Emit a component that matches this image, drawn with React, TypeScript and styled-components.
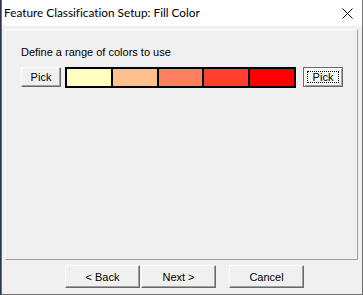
import React from 'react';
import styled, { createGlobalStyle } from 'styled-components';

const GlobalStyle = createGlobalStyle`
  html, body {
    margin: 0;
    padding: 0;
    background: #2a3552;
  }
  body {
    width: 363px;
    height: 295px;
    overflow: hidden;
  }
  * {
    box-sizing: border-box;
  }
`;

const Window = styled.div`
  width: 362px;
  height: 295px;
  margin-left: 1px;
  display: flex;
  flex-direction: column;
  background: #f0f0f0;
  border-left: 1px solid #6f6f6f;
  border-right: 1px solid #6f6f6f;
  border-bottom: 1px solid #6f6f6f;
  font-family: "Liberation Sans", Arial, sans-serif;
  color: #000;
`;

const TitleBar = styled.div`
  height: 26px;
  flex: none;
  display: flex;
  align-items: center;
  justify-content: space-between;
  background: #fff;
  padding-left: 2px;
`;

const Title = styled.span`
  font-family: Lato, "Liberation Sans", sans-serif;
  font-size: 11.8px;
  line-height: 16px;
  font-variant-ligatures: none;
`;

const CloseButton = styled.div`
  width: 30px;
  height: 26px;
  display: flex;
  align-items: center;
  justify-content: center;
`;

const Body = styled.div`
  flex: 1;
  display: flex;
  flex-direction: column;
  padding: 3px 4px 0 3px;
`;

const Panel = styled.div`
  height: 231px;
  flex: none;
  display: flex;
  flex-direction: column;
  padding: 16px 0 0 15px;
  background: #f0f0f0;
  border-top: 1px solid #fff;
  border-left: 1px solid #fff;
  border-right: 1px solid #a0a0a0;
  border-bottom: 1px solid #a0a0a0;
`;

const Label = styled.div`
  font-size: 11px;
  line-height: 13px;
`;

const Row = styled.div`
  display: flex;
  align-items: flex-start;
  margin-top: 8px;
`;

const Button = styled.button<{ $small?: boolean; $default?: boolean }>`
  width: ${(p) => (p.$small ? 40 : 75)}px;
  height: ${(p) => (p.$small ? 20 : 23)}px;
  padding: 0;
  margin: 0;
  display: flex;
  align-items: stretch;
  justify-content: center;
  font-family: "Liberation Sans", Arial, sans-serif;
  font-size: 11px;
  color: #000;
  background: ${(p) => (p.$default ? '#f6f6f6' : '#f0f0f0')};
  border: 1px solid;
  border-color: ${(p) =>
    p.$default ? '#6a6a6a' : '#ffffff #696969 #696969 #ffffff'};
  box-shadow: ${(p) =>
    p.$default
      ? 'inset 1px 1px 0 #ffffff, inset -1px -1px 0 #a0a0a0'
      : 'inset -1px -1px 0 #a0a0a0'};
  cursor: default;
`;

const Caption = styled.span`
  flex: 1;
  display: flex;
  align-items: center;
  justify-content: center;
`;

const FocusRing = styled.span`
  flex: 1;
  display: flex;
  align-items: center;
  justify-content: center;
  margin: 3px;
  border: 1px dotted #000;
`;

const Swatches = styled.div`
  width: 231px;
  height: 21px;
  margin: 0 7px 0 4px;
  display: grid;
  grid-template-columns: repeat(5, 1fr);
  gap: 2px;
  padding: 2px;
  background: #000;
`;

const Swatch = styled.div<{ $color: string }>`
  background: ${(p) => p.$color};
`;

const ButtonBar = styled.div`
  display: flex;
  padding: 5px 0 0 60px;
`;

const Gap = styled.div<{ $w: number }>`
  width: ${(p) => p.$w}px;
  flex: none;
`;

const colors = ['#ffffc0', '#ffc090', '#ff8060', '#ff4030', '#ff0000'];

const App: React.FC = () => {
  return (
    <>
      <GlobalStyle />
      <Window>
        <TitleBar>
          <Title>Feature Classification Setup: Fill Color</Title>
          <CloseButton>
            <svg width="11" height="11" viewBox="0 0 11 11">
              <path d="M0.5 0.5 L10.5 10.5 M10.5 0.5 L0.5 10.5" stroke="#000" strokeWidth="1" />
            </svg>
          </CloseButton>
        </TitleBar>
        <Body>
          <Panel>
            <Label>Define a range of colors to use</Label>
            <Row>
              <Button $small>
                <Caption>Pick</Caption>
              </Button>
              <Swatches>
                {colors.map((c) => (
                  <Swatch key={c} $color={c} />
                ))}
              </Swatches>
              <Button $small $default>
                <FocusRing>Pick</FocusRing>
              </Button>
            </Row>
          </Panel>
          <ButtonBar>
            <Button>
              <Caption>&lt; Back</Caption>
            </Button>
            <Gap $w={1} />
            <Button>
              <Caption>Next &gt;</Caption>
            </Button>
            <Gap $w={13} />
            <Button>
              <Caption>Cancel</Caption>
            </Button>
          </ButtonBar>
        </Body>
      </Window>
    </>
  );
};

export default App;
